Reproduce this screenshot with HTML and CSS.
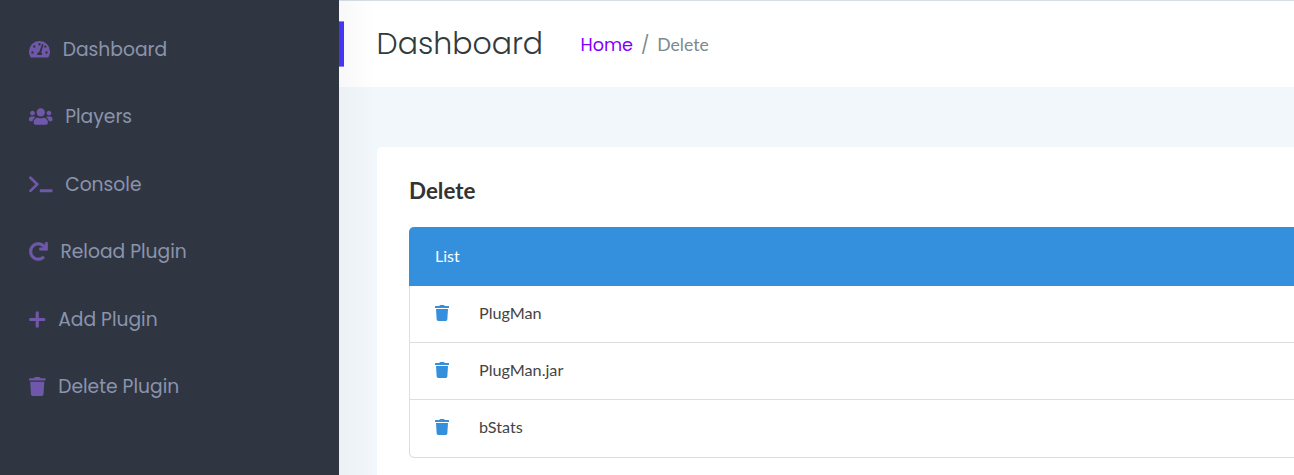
FILE: index.html
```html
<!DOCTYPE html>
<html lang="en">
<head>
<meta charset="utf-8">
<title>Dashboard</title>
<link rel="stylesheet" href="styles.css">
</head>
<body>
<div class="app">
  <nav class="sidebar">
    <a class="item"><svg class="dash-icon" viewBox="0 0 21 17"><path fill="currentColor" fill-rule="evenodd" d="M10.5 0A10.4 10.4 0 0 0 0 10.4c0 2 .6 3.9 1.5 5.5.3.4.7.6 1.2.6h15.6c.5 0 .9-.2 1.2-.6.9-1.600 1.500-3.500 1.500-5.500A10.400 10.400 0 0 0 10.500 0ZM10.500 2.100a1.200 1.200 0 1 1 0 2.400 1.200 1.200 0 0 1 0-2.400ZM5.300 4.300a1.200 1.200 0 1 1 0 2.400 1.200 1.200 0 0 1 0-2.400ZM3.500 10.300a1.200 1.200 0 1 1 0 2.400 1.200 1.200 0 0 1 0-2.400ZM17.500 10.300a1.200 1.200 0 1 1 0 2.400 1.200 1.200 0 0 1 0-2.400ZM16.300 4.400a1.200 1.200 0 1 1 0 2.400 1.200 1.200 0 0 1 0-2.400ZM13.100 3.100l1.400.4-2.200 8.100c.7.500 1 1.300.7 2.300H8.200c-.3-1.500.5-2.600 2-2.800Z"/></svg><span>Dashboard</span></a>
    <a class="item"><svg class="users-icon" viewBox="0 0 640 512"><path fill="currentColor" d="M96 224c35.300 0 64-28.700 64-64s-28.700-64-64-64-64 28.700-64 64 28.700 64 64 64zm448 0c35.300 0 64-28.700 64-64s-28.700-64-64-64-64 28.700-64 64 28.700 64 64 64zm32 32h-64c-17.600 0-33.500 7.100-45.100 18.600 40.300 22.100 68.900 62 75.100 109.400h66c17.700 0 32-14.300 32-32v-32c0-35.300-28.700-64-64-64zm-256 0c61.900 0 112-50.100 112-112S381.900 32 320 32 208 82.100 208 144s50.100 112 112 112zm76.800 32h-8.300c-20.800 10-43.900 16-68.500 16s-47.600-6-68.500-16h-8.300C179.600 288 128 339.600 128 403.200V432c0 26.500 21.500 48 48 48h288c26.500 0 48-21.500 48-48v-28.800c0-63.600-51.600-115.200-115.200-115.200zm-223.700-13.400C161.500 263.100 145.600 256 128 256H64c-35.300 0-64 28.700-64 64v32c0 17.700 14.300 32 32 32h65.900c6.300-47.400 34.900-87.300 75.200-109.400z"/></svg><span>Players</span></a>
    <a class="item"><svg class="term-icon" viewBox="0 0 24 17"><path fill="none" stroke="currentColor" stroke-width="2.800" stroke-linecap="round" stroke-linejoin="round" d="M1.500 1.600 8.400 8.300 1.500 15"/><rect fill="currentColor" x="11" y="13.400" width="13" height="3" rx=".8"/></svg><span>Console</span></a>
    <a class="item"><svg class="redo-icon" viewBox="0 0 512 512"><path fill="currentColor" stroke="currentColor" stroke-width="16" d="M500.330 0h-47.410a12 12 0 0 0-12 12.570l4 82.760A247.420 247.420 0 0 0 256 8C119.340 8 7.900 119.530 8 256.190 8.100 393.070 119.100 504 256 504a247.100 247.100 0 0 0 166.180-63.910 12 12 0 0 0 .48-17.430l-34-34a12 12 0 0 0-16.380-.55A176 176 0 1 1 402.100 157.800l-101.530-4.870a12 12 0 0 0-12.570 12v47.410a12 12 0 0 0 12 12h200.330a12 12 0 0 0 12-12V12a12 12 0 0 0-12-12z"/><path fill="currentColor" d="M445 60V155H330V210H490V20Z"/></svg><span>Reload Plugin</span></a>
    <a class="item"><svg class="plus-icon" viewBox="0 0 17 17"><path fill="none" stroke="currentColor" stroke-width="3.200" stroke-linecap="round" d="M1.600 8.500h13.800M8.500 1.600v13.800"/></svg><span>Add Plugin</span></a>
    <a class="item"><svg class="bin-icon" viewBox="0 0 448 512"><path fill="currentColor" d="M432 32H312l-9.400-18.700A24 24 0 0 0 281.100 0H166.800a23.720 23.720 0 0 0-21.400 13.300L136 32H16A16 16 0 0 0 0 48v32a16 16 0 0 0 16 16h416a16 16 0 0 0 16-16V48a16 16 0 0 0-16-16zM32 128l21.200 339a48 48 0 0 0 47.900 45h245.800a48 48 0 0 0 47.900-45L416 128z"/></svg><span>Delete Plugin</span></a>
  </nav>
  <main class="main">
    <header class="header">
      <h1 class="title">Dashboard</h1>
      <div class="crumbs"><a class="home">Home</a><span class="slash">/</span><span class="current">Delete</span></div>
    </header>
    <section class="card">
      <h2 class="card-title">Delete</h2>
      <div class="table">
        <div class="thead">List</div>
        <div class="row"><svg class="trash" viewBox="0 0 448 512"><path fill="currentColor" d="M432 32H312l-9.400-18.700A24 24 0 0 0 281.100 0H166.800a23.720 23.720 0 0 0-21.400 13.300L136 32H16A16 16 0 0 0 0 48v32a16 16 0 0 0 16 16h416a16 16 0 0 0 16-16V48a16 16 0 0 0-16-16zM32 128l21.200 339a48 48 0 0 0 47.900 45h245.800a48 48 0 0 0 47.900-45L416 128z"/></svg><span>PlugMan</span></div>
        <div class="row"><svg class="trash" viewBox="0 0 448 512"><path fill="currentColor" d="M432 32H312l-9.400-18.700A24 24 0 0 0 281.100 0H166.800a23.720 23.720 0 0 0-21.400 13.300L136 32H16A16 16 0 0 0 0 48v32a16 16 0 0 0 16 16h416a16 16 0 0 0 16-16V48a16 16 0 0 0-16-16zM32 128l21.200 339a48 48 0 0 0 47.900 45h245.800a48 48 0 0 0 47.900-45L416 128z"/></svg><span>PlugMan.jar</span></div>
        <div class="row"><svg class="trash" viewBox="0 0 448 512"><path fill="currentColor" d="M432 32H312l-9.400-18.700A24 24 0 0 0 281.100 0H166.800a23.720 23.720 0 0 0-21.400 13.300L136 32H16A16 16 0 0 0 0 48v32a16 16 0 0 0 16 16h416a16 16 0 0 0 16-16V48a16 16 0 0 0-16-16zM32 128l21.200 339a48 48 0 0 0 47.900 45h245.800a48 48 0 0 0 47.900-45L416 128z"/></svg><span>bStats</span></div>
      </div>
    </section>
    <div class="shade"></div>
    <div class="marker"></div>
  </main>
</div>
</body>
</html>
```
FILE: styles.css
```css
* { box-sizing: border-box; }
body { margin: 0; overflow: hidden; font-family: Lato, sans-serif; }
.app { display: flex; height: 475px; overflow: hidden; }
.sidebar { width: 339px; flex: none; background: #303641; padding: 16px 0 0 29px; }
.item { display: flex; align-items: center; height: 67.5px; color: #8a94ad; font: 400 18.72px/28px Poppins, Inter, sans-serif; white-space: nowrap; }
.item svg { flex: none; color: #6f58a9; margin-right: 12.7px; }
.dash-icon { width: 21px; height: 17px; }
.users-icon { width: 23.5px; height: 19px; margin-top: -2px; }
.term-icon { width: 23.5px; height: 17px; margin-top: -1px; }
.redo-icon { width: 18.7px; height: 19px; margin-top: -1px; }
.plus-icon { width: 16.5px; height: 17px; }
.bin-icon { width: 16.5px; height: 19px; margin-top: -1px; }
.main { flex: 1; position: relative; background: #f2f7fb; overflow: hidden; }
.header { display: flex; align-items: center; height: 87px; padding-left: 37.5px; background: #fff; border-top: 1px solid #d5e0e6; }
.title { margin: 0; width: 204px; color: #313b3d; font: 300 30px/40px Poppins, Inter, sans-serif; }
.crumbs { display: flex; align-items: center; padding-top: 1px; color: #7b8a8b; font-size: 17.6px; line-height: 24px; }
.home { width: 60.5px; color: #7f00ff; font: 400 17.6px/24px Poppins, Inter, sans-serif; }
.slash { width: 16.3px; font: 400 17.6px/24px Poppins, Inter, sans-serif; }
.card { width: 1000px; height: 400px; margin: 60px 0 0 38px; padding: 30px 32px; background: #fff; border-radius: 5px; }
.card-title { margin: 0 0 22px; height: 28px; color: #333; font-size: 22.4px; line-height: 28px; font-weight: 700; }
.table { height: 231px; border: 1px solid #dcdedf; border-top: 0; border-left: 0; box-shadow: inset 1px 0 #dcdedf; border-radius: 5px; overflow: hidden; color: #444; font-size: 16.2px; }
.thead { height: 59px; padding-left: 26px; background: #3490dc; color: #fff; font-size: 16px; line-height: 58px; }
.row { display: flex; align-items: center; height: 57px; padding: 0 0 3px 26px; border-bottom: 1px solid #dcdedf; }
.row:last-child { border-bottom: 0; padding-bottom: 4px; }
.trash { width: 14px; height: 16px; margin-right: 30px; color: #3490dc; }
.shade { position: absolute; inset: 0 auto 0 0; width: 38px; background: linear-gradient(90deg, rgba(0,0,0,.026), transparent); }
.marker { position: absolute; left: 0; top: 21px; width: 5px; height: 46px; background: #4435f5; border: solid #8b82f5; border-width: 1px 0; }
```
